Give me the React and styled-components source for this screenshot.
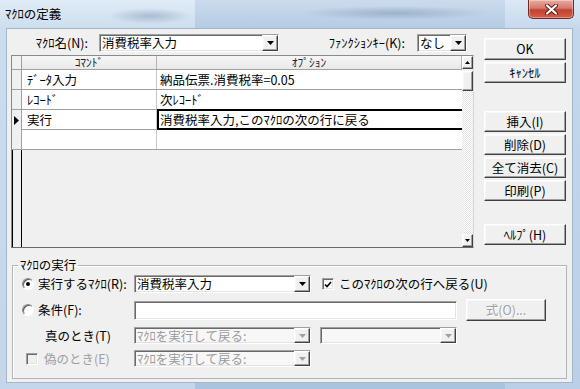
import React from 'react';
import styled, { createGlobalStyle, css } from 'styled-components';

const GlobalStyle = createGlobalStyle`
  html, body {
    margin: 0;
    padding: 0;
    background: #b9d1ea;
  }
  body {
    font-family: "Noto Sans CJK JP", "Liberation Sans", sans-serif;
    font-size: 12.5px;
    color: #000;
  }
  * {
    box-sizing: border-box;
  }
`;

// 3D borders (classic windows look)
const sunken = css`
  border: 1px solid;
  border-color: #a0a0a0 #fff #fff #a0a0a0;
  box-shadow: inset 1px 1px 0 #696969, inset -1px -1px 0 #e3e3e3;
`;

const raised = css`
  border: 1px solid;
  border-color: #fff #404040 #404040 #fff;
  box-shadow: inset -1px -1px 0 #a0a0a0, inset 1px 1px 0 #f8f8f8;
`;

//ウィンドウ枠
const Frame = styled.div`
  width: 580px;
  height: 389px;
  display: flex;
  flex-direction: column;
  padding: 0 7px 6px 6px;
  background:
    radial-gradient(ellipse 42px 8px at 150px 16px, rgba(90, 115, 145, 0.35), transparent),
    radial-gradient(ellipse 95px 7px at 395px 13px, rgba(90, 115, 145, 0.35), transparent),
    linear-gradient(90deg, rgba(255, 255, 255, 0.22) 0 195px, rgba(110, 140, 175, 0.12) 195px 505px, rgba(255, 255, 255, 0.1) 505px),
    linear-gradient(180deg, #d8e6f4 0%, #bcd3ea 8%, #b3cbe5 100%);
`;

//タイトルバー
const TitleBar = styled.div`
  height: 28px;
  display: flex;
  justify-content: space-between;
  align-items: flex-start;
`;

const Title = styled.div`
  margin: 6px 0 0 -1px;
  line-height: 16px;
  font-size: 12.5px;
`;

const CloseButton = styled.div`
  width: 46px;
  height: 19px;
  margin-right: -1px;
  display: flex;
  align-items: center;
  justify-content: center;
  border: 1px solid #6e2a24;
  border-top: none;
  border-radius: 0 0 5px 5px;
  background: linear-gradient(180deg, #e8aca2 0%, #d7796c 45%, #c2412f 55%, #d45f4b 100%);
  box-shadow: inset 0 0 0 1px rgba(255, 255, 255, 0.35);
`;

//クライアント領域
const Client = styled.div`
  flex: 1;
  background: #f0f0f0;
  border: 1px solid #a4b6ca;
  padding: 5px 0 0 4px;
  display: flex;
  flex-direction: column;
`;

const TopSection = styled.div`
  display: flex;
  align-items: flex-start;
`;

const LeftColumn = styled.div`
  width: 463px;
  display: flex;
  flex-direction: column;
`;

const NameRow = styled.div`
  height: 18px;
  display: flex;
  align-items: center;
`;

const FieldLabel = styled.label`
  width: ${(p) => (p.$w ? `${p.$w}px` : 'auto')};
  margin-right: ${(p) => p.$gap || 0}px;
  margin-left: ${(p) => (p.$push ? 'auto' : '0')};
  text-align: right;
  line-height: 16px;
  white-space: nowrap;
`;

//コンボボックス
const ComboBox = styled.div`
  width: ${(p) => p.$w}px;
  height: ${(p) => p.$h || 18}px;
  margin-right: ${(p) => p.$mr || 0}px;
  display: flex;
  align-items: center;
  ${sunken}
  background: ${(p) => (p.$disabled ? '#f7f7f7' : '#fff')};
`;

const ComboText = styled.span`
  flex: 1;
  padding: 0 0 0 2px;
  line-height: 14px;
  white-space: nowrap;
  color: ${(p) => (p.$disabled ? '#9a9a9a' : '#000')};
`;

const DropButton = styled.span`
  width: 16px;
  align-self: stretch;
  display: flex;
  align-items: center;
  justify-content: center;
  background: #f0f0f0;
  ${raised}
`;

const ArrowIcon = styled.svg`
  display: block;
`;

const DownArrow = ({ color = '#000' }) => (
  <ArrowIcon width="7" height="4" viewBox="0 0 7 4">
    <path d="M0 0h7L3.5 4z" fill={color} />
  </ArrowIcon>
);

const Combo = ({ w, h, mr, value, disabled }) => (
  <ComboBox $w={w} $h={h} $mr={mr} $disabled={disabled}>
    <ComboText $disabled={disabled}>{value}</ComboText>
    <DropButton>
      <DownArrow color={disabled ? '#a0a0a0' : '#000'} />
    </DropButton>
  </ComboBox>
);

//データシート
const Sheet = styled.div`
  margin-top: 3px;
  height: 193px;
  display: flex;
  border: 1px solid;
  border-color: #8a8a8a #d8d8d8 #6a6a6a #8a8a8a;
  background: #f0f0f0;
`;

const SheetBody = styled.div`
  flex: 1;
  display: flex;
  flex-direction: column;
`;

const SheetRow = styled.div`
  display: grid;
  grid-template-columns: 10px 135px 1fr;
  height: ${(p) => (p.$header ? 14 : 20)}px;
  border-bottom: 1px solid #a0a0a0;
  background: ${(p) => (p.$header ? 'linear-gradient(#f6f6f6, #e9e9e9)' : '#fff')};
`;

const Selector = styled.div`
  background: #f0f0f0;
  border-right: 1px solid #a0a0a0;
  display: flex;
  align-items: center;
  padding-left: 2px;
`;

const HeaderCell = styled.div`
  border-right: 1px solid #b4b4b4;
  font-size: 11.5px;
  line-height: 13px;
  text-align: center;
  color: #222;
`;

const Cell = styled.div`
  border-right: ${(p) => (p.$last ? 'none' : '1px solid #c8c8c8')};
  padding-left: ${(p) => (p.$last ? 3 : 5)}px;
  line-height: 19px;
  white-space: nowrap;
  ${(p) =>
    p.$current &&
    css`
      box-shadow: inset 2px 0 0 #000, inset 0 2px 0 #000, inset 0 -2px 0 #000;
      margin-top: -1px;
      line-height: 21px;
    `}
`;

const RowMarker = styled.svg`
  display: block;
`;

const Filler = styled.div`
  flex: 1;
  display: flex;
`;

const SelectorStrip = styled.div`
  width: 10px;
  border-left: 1px solid #000;
  border-right: 1px solid #000;
`;

//スクロールバー
const ScrollBar = styled.div`
  width: 11px;
  display: flex;
  flex-direction: column;
  background: repeating-conic-gradient(#fff 0 25%, #e2e2e2 0 50%) 0 0 / 2px 2px;
`;

const ScrollButton = styled.div`
  height: 13px;
  display: flex;
  align-items: center;
  justify-content: center;
  background: #f0f0f0;
  ${raised}
`;

const Thumb = styled.div`
  height: 20px;
  margin-top: 2px;
  background: #f0f0f0;
  ${raised}
`;

const Track = styled.div`
  flex: 1;
`;

const TinyArrow = ({ up }) => (
  <ArrowIcon width="5" height="3" viewBox="0 0 5 3">
    <path d={up ? 'M0 3h5L2.5 0z' : 'M0 0h5L2.5 3z'} fill="#000" />
  </ArrowIcon>
);

//右側ボタン
const ButtonColumn = styled.div`
  width: 82px;
  margin-left: 10px;
  padding-top: 4px;
  display: flex;
  flex-direction: column;
`;

const PushButton = styled.div`
  height: ${(p) => p.$h || 21}px;
  margin-top: ${(p) => p.$mt || 0}px;
  display: flex;
  align-items: center;
  justify-content: center;
  background: #f0f0f0;
  ${raised}
  line-height: 16px;
  white-space: nowrap;
  color: ${(p) => (p.$disabled ? '#a0a0a0' : '#000')};
  text-shadow: ${(p) => (p.$disabled ? '1px 1px 0 #fff' : 'none')};
`;

//マクロの実行グループ
const GroupBox = styled.fieldset`
  margin: 10px 0 0 1px;
  width: 555px;
  height: 121px;
  padding: 3px 0 0 0;
  border: 1px solid #b4b4b4;
  box-shadow: 1px 1px 0 #fff inset;
`;

const Legend = styled.legend`
  margin-left: 5px;
  padding: 0 2px;
  line-height: 14px;
`;

const GroupGrid = styled.div`
  display: grid;
  grid-template-columns: 112px 177px 137px 80px;
  grid-template-rows: 18px 22px 17px 17px;
  column-gap: 9px;
  row-gap: 6px;
  align-items: center;
`;

const OptionLabel = styled.label`
  display: flex;
  align-items: center;
  gap: ${(p) => p.$gap || 4}px;
  padding-left: ${(p) => p.$indent || 9}px;
  line-height: 16px;
  white-space: nowrap;
  grid-column: ${(p) => p.$span || 'auto'};
  color: ${(p) => (p.$disabled ? '#a0a0a0' : '#000')};
`;

const Radio = styled.span`
  width: 12px;
  height: 12px;
  flex: none;
  border-radius: 50%;
  border: 1px solid;
  border-color: #8a8a8a #fff #fff #8a8a8a;
  background: #fff;
  box-shadow: inset 1px 1px 0 #5a5a5a;
  display: flex;
  align-items: center;
  justify-content: center;

  &::after {
    content: '';
    display: ${(p) => (p.$checked ? 'block' : 'none')};
    width: 4px;
    height: 4px;
    border-radius: 50%;
    background: #000;
  }
`;

const CheckBox = styled.span`
  width: 12px;
  height: 12px;
  flex: none;
  ${sunken}
  background: ${(p) => (p.$disabled ? '#f0f0f0' : '#fff')};
  display: flex;
  align-items: center;
  justify-content: center;
`;

const CheckMark = styled.svg`
  display: block;
`;

const TextInput = styled.div`
  grid-column: 2 / 4;
  height: 19px;
  ${sunken}
  background: #fff;
`;

const sheetRows = [
  { command: 'ﾃﾞｰﾀ入力', option: '納品伝票.消費税率=0.05' },
  { command: 'ﾚｺｰﾄﾞ', option: '次ﾚｺｰﾄﾞ' },
  { command: '実行', option: '消費税率入力,このﾏｸﾛの次の行に戻る', current: true },
  { command: '', option: '' },
];

const App = () => (
  <>
    <GlobalStyle />
    <Frame>
      <TitleBar>
        <Title>ﾏｸﾛの定義</Title>
        <CloseButton>
          <svg width="13" height="11" viewBox="0 0 13 11">
            <path d="M2 1.5l9 8M11 1.5l-9 8" stroke="#5a1a14" strokeWidth="4" strokeLinecap="round" />
            <path d="M2 1.5l9 8M11 1.5l-9 8" stroke="#fff" strokeWidth="2.2" strokeLinecap="round" />
          </svg>
        </CloseButton>
      </TitleBar>

      <Client>
        <TopSection>
          <LeftColumn>
            <NameRow>
              <FieldLabel $w={77} $gap={11}>ﾏｸﾛ名(N):</FieldLabel>
              <Combo w={180} value="消費税率入力" />
              <FieldLabel $push $gap={12}>ﾌｧﾝｸｼｮﾝｷｰ(K):</FieldLabel>
              <Combo w={50} mr={7} value="なし" />
            </NameRow>

            <Sheet>
              <SheetBody>
                <SheetRow $header>
                  <Selector />
                  <HeaderCell>ｺﾏﾝﾄﾞ</HeaderCell>
                  <HeaderCell>ｵﾌﾟｼｮﾝ</HeaderCell>
                </SheetRow>
                {sheetRows.map((row, i) => (
                  <SheetRow key={i}>
                    <Selector>
                      {row.current && (
                        <RowMarker width="5" height="9" viewBox="0 0 5 9">
                          <path d="M0 0l5 4.5L0 9z" fill="#000" />
                        </RowMarker>
                      )}
                    </Selector>
                    <Cell>{row.command}</Cell>
                    <Cell $last $current={row.current}>
                      {row.option}
                    </Cell>
                  </SheetRow>
                ))}
                <Filler>
                  <SelectorStrip />
                </Filler>
              </SheetBody>
              <ScrollBar>
                <ScrollButton>
                  <TinyArrow up />
                </ScrollButton>
                <Thumb />
                <Track />
                <ScrollButton>
                  <TinyArrow />
                </ScrollButton>
              </ScrollBar>
            </Sheet>
          </LeftColumn>

          <ButtonColumn>
            <PushButton $h={22}>OK</PushButton>
            <PushButton $mt={2}>ｷｬﾝｾﾙ</PushButton>
            <PushButton $mt={28}>挿入(I)</PushButton>
            <PushButton $mt={2}>削除(D)</PushButton>
            <PushButton $mt={2}>全て消去(C)</PushButton>
            <PushButton $mt={2}>印刷(P)</PushButton>
            <PushButton $mt={23}>ﾍﾙﾌﾟ(H)</PushButton>
          </ButtonColumn>
        </TopSection>

        <GroupBox>
          <Legend>ﾏｸﾛの実行</Legend>
          <GroupGrid>
            <OptionLabel>
              <Radio $checked />
              実行するﾏｸﾛ(R):
            </OptionLabel>
            <Combo w={177} value="消費税率入力" />
            <OptionLabel $span="3 / 5" $indent={2} $gap={5}>
              <CheckBox>
                <CheckMark width="8" height="7" viewBox="0 0 8 7">
                  <path d="M1 3.5l2 2 4-4.5" stroke="#000" strokeWidth="1.6" fill="none" />
                </CheckMark>
              </CheckBox>
              このﾏｸﾛの次の行へ戻る(U)
            </OptionLabel>

            <OptionLabel>
              <Radio />
              条件(F):
            </OptionLabel>
            <TextInput />
            <PushButton $h={22} $disabled>
              式(O)...
            </PushButton>

            <OptionLabel $indent={32}>真のとき(T)</OptionLabel>
            <Combo w={177} h={17} value="ﾏｸﾛを実行して戻る:" disabled />
            <Combo w={137} h={17} value="" disabled />
            <span />

            <OptionLabel $indent={13} $gap={6} $disabled>
              <CheckBox $disabled />
              偽のとき(E)
            </OptionLabel>
            <Combo w={177} h={17} value="ﾏｸﾛを実行して戻る:" disabled />
          </GroupGrid>
        </GroupBox>
      </Client>
    </Frame>
  </>
);

export default App;
